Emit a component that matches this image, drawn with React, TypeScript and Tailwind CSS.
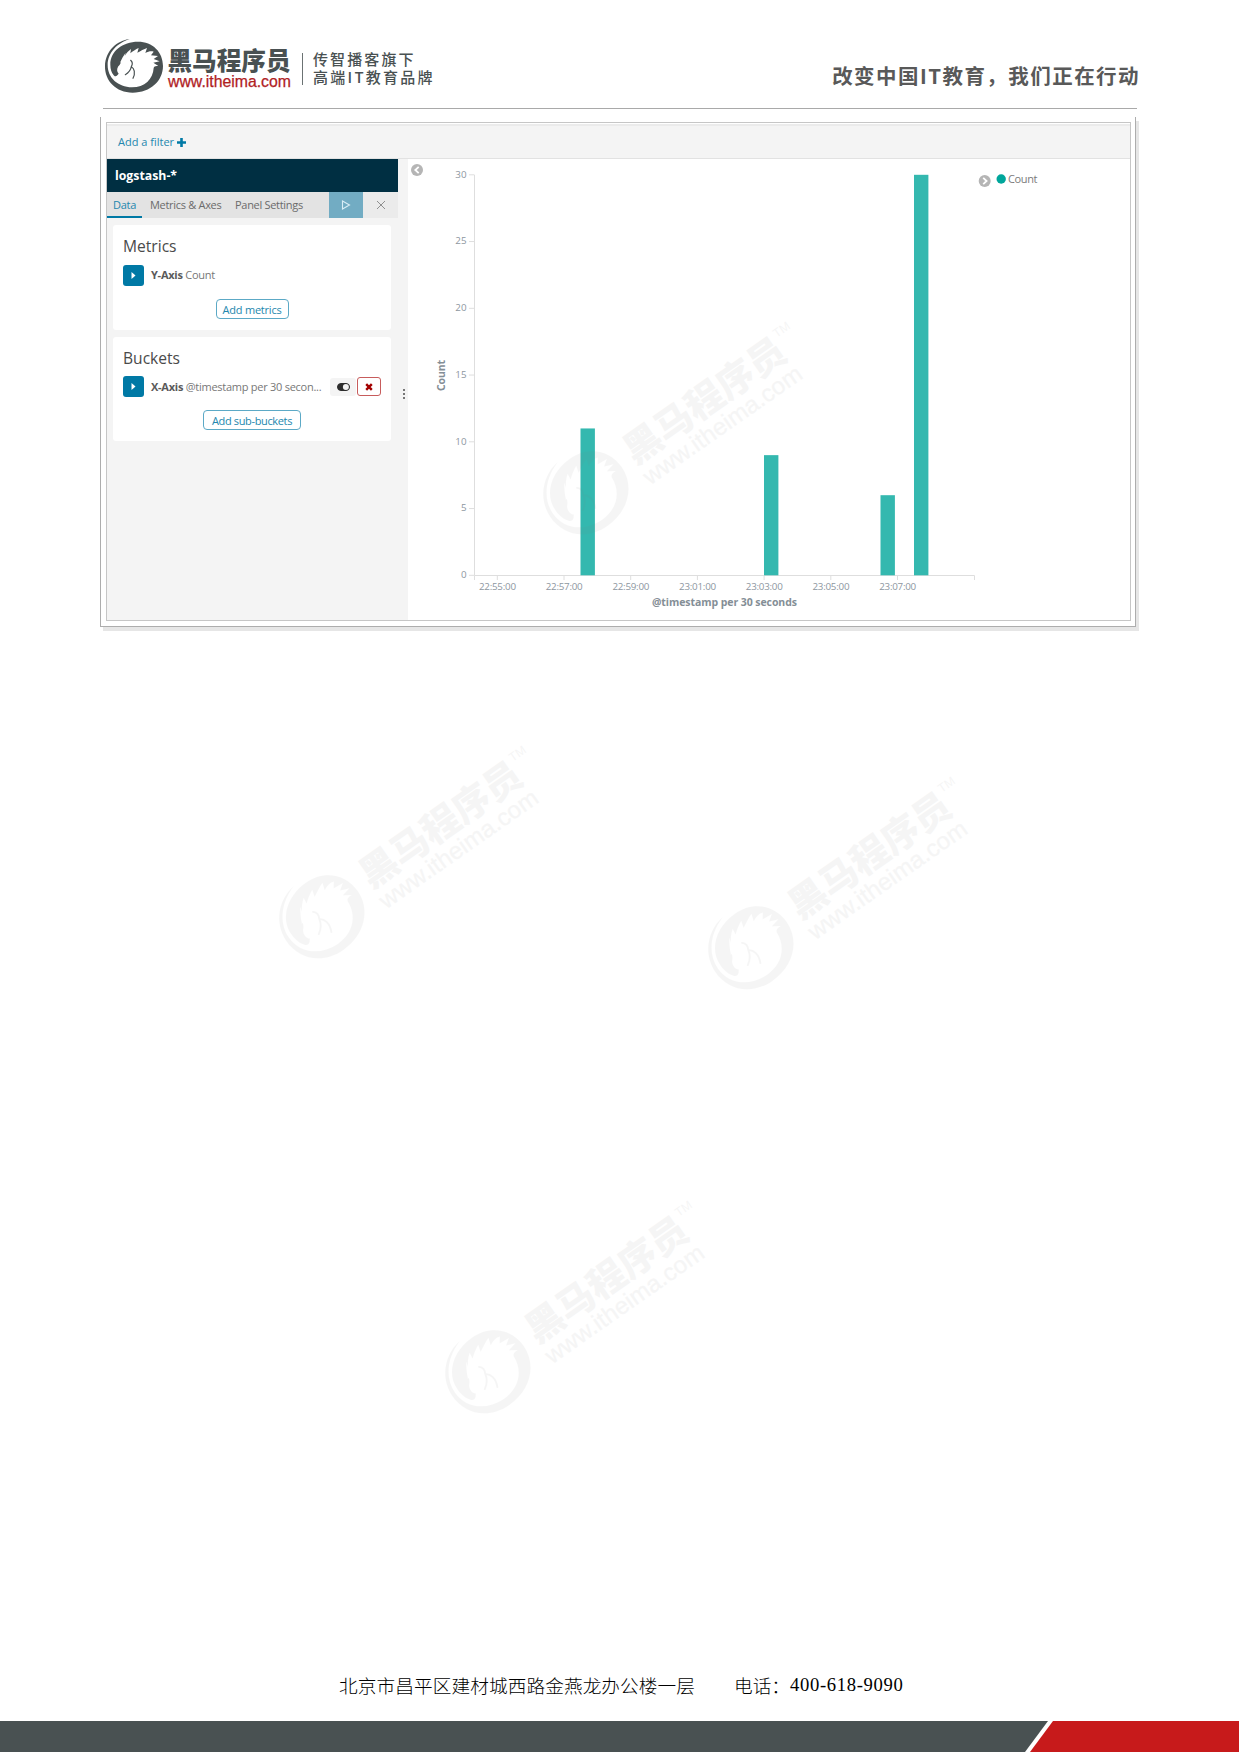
import React from "react";

const TEXT_FONT = "font-['Open_Sans','Noto_Sans_CJK_SC',sans-serif]";
const CJK = "'Noto Sans CJK SC', sans-serif";

type LogoProps = {
  className: string;
  ink: string;
  accent: string;
  textTransform?: string;
  trademark?: boolean;
};

function Logo({ className, ink, accent, textTransform, trademark }: LogoProps) {
  return (
    <svg className={className} viewBox="0 0 190 60" overflow="visible">
      <g transform="scale(0.33333) translate(-42 -24)" fill={ink}>
        <path
          fillRule="evenodd"
          d="M119 27 C82 31 46 62 45 108 C44 152 78 188 128 188 C182 188 219 152 219 108 C219 66 188 35 144 35 C98 35 60 64 61 104 C61 118 65 128 70 134 C72 138 77 141 82 136 L86 131 C80 126 80 116 85 109 C90 105 91 101 93 97 L90 98 C95 86 101 76 107 68 L104 78 C109 69 116 62 123 57 L121 70 C128 64 137 58 146 54 L142 68 C152 63 162 57 171 54 L166 69 C175 64 184 62 191 65 L183 76 L204 78 L191 87 L209 94 L190 98 L205 108 C196 107 192 109 191 114 C189 148 164 172 126 172 C84 171 53 144 53 105 C53 68 83 38 119 27 Z"
        />
        <path
          d="M122 91 C128 96 128 103 124 110 C122 121 116 128 106 134 M124 110 C133 115 137 129 129 145"
          fill="none"
          stroke={ink}
          strokeWidth="3.6"
          strokeLinecap="round"
        />
      </g>
      <g transform={textTransform}>
        <text
          x="63.5"
          y="32.3"
          fontSize="24.5"
          fontWeight="900"
          textLength="123"
          lengthAdjust="spacingAndGlyphs"
          fill={ink}
          style={{ fontFamily: CJK }}
        >
          黑马程序员
        </text>
        <text
          x="64"
          y="48.5"
          fontSize="15.6"
          textLength="123"
          lengthAdjust="spacingAndGlyphs"
          fill={accent}
          stroke={accent}
          strokeWidth="0.25"
          style={{ fontFamily: "'Liberation Sans', sans-serif" }}
        >
          www.itheima.com
        </text>
        {trademark && (
          <text x="187" y="17" fontSize="8" fill={ink} style={{ fontFamily: "'Liberation Sans', sans-serif" }}>
            TM
          </text>
        )}
      </g>
    </svg>
  );
}

function Watermark({ className }: { className: string }) {
  return (
    <div className={`pointer-events-none absolute opacity-[0.07] ${className}`}>
      <Logo
        className="h-[90px] w-[285px] origin-[45px_42px] -rotate-[35deg]"
        ink="#808080"
        accent="#808080"
        textTransform="translate(2.2 -0.6) scale(1.02)"
        trademark
      />
    </div>
  );
}

function Header() {
  return (
    <header className="mx-auto flex h-[109px] w-[1034px] border-b-[1.5px] border-[#a9a9a9] pt-[38px]">
      <Logo className="ml-px h-[60px] w-[190px]" ink="#495152" accent="#b0211f" />
      <div className="ml-2 mt-[15px] h-8 w-px bg-[#6b7273]" />
      <div className="ml-[10px] mt-3 whitespace-nowrap font-['Noto_Sans_CJK_SC',sans-serif] text-[15px] font-medium leading-[18px] text-[#495152]">
        <div className="tracking-[2.1px]">传智播客旗下</div>
        <div className="tracking-[2.25px]">高端IT教育品牌</div>
      </div>
      <div className="-mr-[3px] ml-auto mt-[23px] whitespace-nowrap font-['Noto_Sans_CJK_SC',sans-serif] text-[20.5px] font-bold leading-7 tracking-[1.45px] text-[#595959]">
        改变中国IT教育，我们正在行动
      </div>
    </header>
  );
}

function ExpandButton() {
  return (
    <span className="flex size-[21px] shrink-0 items-center justify-center rounded-[3px] bg-[#0079a5]">
      <svg className="h-[7px] w-[5px]" viewBox="0 0 5 7">
        <path d="M0.5 0 L4.5 3.5 L0.5 7 Z" fill="#fff" />
      </svg>
    </span>
  );
}

function AddButton({ className, children }: { className: string; children: React.ReactNode }) {
  return (
    <button
      className={`mx-auto flex h-5 items-center justify-center whitespace-nowrap rounded-[4px] border-[1.5px] border-[#5ca9c6] text-[11px] leading-none text-[#2487ae] ${className}`}
    >
      {children}
    </button>
  );
}

function Sidebar() {
  return (
    <aside className="flex w-[301px] shrink-0 bg-[#f4f4f4]">
      <div className="w-[291px]">
        <div className="flex h-[33px] items-center bg-[#002f42] pl-2 pt-px text-[12.3px] font-bold text-white">
          <span>logstash-*</span>
        </div>
        <div className="flex h-[26px] bg-[#e3e3e3] text-[11px] tracking-[-0.3px] text-[#6b6b6b]">
          <div className="flex w-[35px] items-center justify-center border-b-2 border-[#0079a5] pt-[2px] text-[#2487ae]">
            Data
          </div>
          <div className="ml-[8px] flex w-[72px] items-center whitespace-nowrap pt-px">Metrics &amp; Axes</div>
          <div className="ml-[13px] flex items-center whitespace-nowrap pt-px">Panel Settings</div>
          <div className="ml-auto flex w-[34px] items-center justify-center bg-[#72acc3]">
            <svg className="size-[10px]" viewBox="0 0 10 10">
              <path d="M1.5 1 L8.5 5 L1.5 9 Z" fill="none" stroke="#d9eef6" strokeWidth="1.1" />
            </svg>
          </div>
          <div className="flex w-[35px] items-center justify-center bg-[#ebebeb]">
            <svg className="size-[10px]" viewBox="0 0 10 10">
              <path d="M1 1 L9 9 M9 1 L1 9" stroke="#8f8f8f" strokeWidth="1" />
            </svg>
          </div>
        </div>
        <div className="ml-[6px] mt-[7px] flex w-[278px] flex-col gap-[7px]">
          <section className="h-[105px] rounded-[3px] bg-white pt-[10px]">
            <h2 className="pl-[10px] text-[15.6px] leading-[22px] text-[#4a4a4a]">Metrics</h2>
            <div className="mt-[8px] flex items-center pl-[10px] text-[11px] tracking-[-0.26px] text-[#777]">
              <ExpandButton />
              <span className="ml-[7px]">
                <b className="text-[#5a5a5a]">Y-Axis</b> Count
              </span>
            </div>
            <AddButton className="mt-[13px] w-[73px] tracking-[-0.2px]">Add metrics</AddButton>
          </section>
          <section className="h-[104px] rounded-[3px] bg-white pt-[10px]">
            <h2 className="pl-[10px] text-[15.6px] leading-[22px] text-[#4a4a4a]">Buckets</h2>
            <div className="mt-[7px] flex items-center pl-[10px] text-[11px] tracking-[-0.26px] text-[#777]">
              <ExpandButton />
              <span className="ml-[7px] w-[179px] whitespace-nowrap pt-px">
                <b className="text-[#5a5a5a]">X-Axis</b> @timestamp per 30 secon...
              </span>
              <span className="flex h-[18px] w-[26px] items-center justify-center rounded-[3px] bg-[#f4f4f4]">
                <svg className="h-2 w-[13px]" viewBox="0 0 13 8">
                  <rect x="0.5" y="0.5" width="12" height="7" rx="3.5" fill="#2d2d2d" stroke="#2d2d2d" />
                  <circle cx="8.9" cy="4" r="3" fill="#f4f4f4" />
                </svg>
              </span>
              <span className="ml-px flex h-[19px] w-6 items-center justify-center rounded-[3px] border-[1.5px] border-[#c75c5c]">
                <svg className="size-2" viewBox="0 0 8 8">
                  <path d="M1.2 1.2 L6.8 6.8 M6.8 1.2 L1.2 6.8" stroke="#a30000" strokeWidth="2.4" />
                </svg>
              </span>
            </div>
            <AddButton className="mt-[13px] w-[98px] tracking-[-0.35px]">Add sub-buckets</AddButton>
          </section>
        </div>
      </div>
      <div className="flex w-[10px] flex-col items-center gap-[2px] pt-[230px]">
        <i className="ml-[2px] size-[2px] bg-[#777]" />
        <i className="ml-[2px] size-[2px] bg-[#777]" />
        <i className="ml-[2px] size-[2px] bg-[#777]" />
      </div>
    </aside>
  );
}

const BARS = [
  { x: 580.5, value: 11 },
  { x: 764, value: 9 },
  { x: 880.5, value: 6 },
  { x: 914, value: 30 },
];
const TIMES = ["22:55:00", "22:57:00", "22:59:00", "23:01:00", "23:03:00", "23:05:00", "23:07:00"];
const COUNTS = [0, 5, 10, 15, 20, 25, 30];
const yOf = (v: number) => 575.3 - v * 13.35;

function Chart() {
  return (
    <svg className="h-[461px] w-[721px] shrink-0 bg-white" viewBox="408 159 721 461">
      <circle cx="417" cy="170" r="6" fill="#b5b5b5" />
      <path d="M418.7 166.8 L415.3 170 L418.7 173.2" fill="none" stroke="#fff" strokeWidth="1.8" />
      <circle cx="984.7" cy="181" r="6" fill="#b5b5b5" />
      <path d="M983.2 177.8 L986.6 181 L983.2 184.2" fill="none" stroke="#fff" strokeWidth="1.8" />
      <circle cx="1001.2" cy="179" r="4.7" fill="#00a69b" />
      <text x="1008" y="183" fontSize="11" textLength="29.5" fill="#7b7b7b">
        Count
      </text>

      <g stroke="#dedede" fill="none">
        <path d="M474.5 175 V575.5" />
        <path d="M474.5 580 V575.5 H974.5 V580" />
        {COUNTS.map((v) => (
          <path key={v} d={`M469 ${yOf(v)} H474.5`} />
        ))}
        {TIMES.map((t, i) => (
          <path key={t} d={`M${497.3 + i * 66.7} 575.5 V580`} />
        ))}
      </g>
      <g fill="#8e979f" fontSize="9.8">
        {COUNTS.map((v) => (
          <text key={v} x="466.5" y={yOf(v) + 2.9} textAnchor="end">
            {v}
          </text>
        ))}
        {TIMES.map((t, i) => (
          <text key={t} x={479 + i * 66.7} y="590.4" textLength="37">
            {t}
          </text>
        ))}
      </g>
      <g fill="#848e96" fontSize="10.5" fontWeight="700">
        <text x="652" y="606.3" textLength="145">
          @timestamp per 30 seconds
        </text>
        <text transform="translate(445 391) rotate(-90)" textLength="31">
          Count
        </text>
      </g>
      {BARS.map((b) => (
        <rect key={b.x} x={b.x} y={yOf(b.value)} width="14.4" height={575.3 - yOf(b.value)} fill="#34b8af" />
      ))}
    </svg>
  );
}

function Screenshot() {
  return (
    <div className="ml-[100px] mt-2 h-[510px] w-[1036px] border-[1.5px] border-t-0 border-[#adadad] pl-[5px] pt-[5px] shadow-[3px_4px_0_#e6e6e6]">
      <div className={`h-[499px] w-[1025px] border border-[#c6c6c6] bg-white pt-px ${TEXT_FONT}`}>
        <div className="flex h-[35px] items-center border-b border-t-2 border-b-[#e2e2e2] border-t-[#ebebeb] bg-[#f4f4f4] pl-[11px] text-[11px] text-[#2487ae]">
          <span>Add a filter</span>
          <svg className="ml-[3px] size-[9px]" viewBox="0 0 9 9">
            <path d="M4.5 0 V9 M0 4.5 H9" stroke="#0079a5" strokeWidth="2.6" />
          </svg>
        </div>
        <div className="flex h-[461px]">
          <Sidebar />
          <Chart />
        </div>
      </div>
    </div>
  );
}

function Footer() {
  return (
    <footer className="mt-auto">
      <div className="ml-[339px] flex h-[54px] whitespace-nowrap font-['Noto_Sans_CJK_SC',sans-serif] text-[18.65px] font-light leading-[36px] text-black">
        <span className="tracking-[0.1px]">北京市昌平区建材城西路金燕龙办公楼一层</span>
        <span className="ml-[39px] w-[56px]">电话：</span>
        <span className="font-['Liberation_Serif',serif] font-normal tracking-[0.65px]">400-618-9090</span>
      </div>
      <div className="flex h-[31px] w-[1239px]">
        <div className="w-[1048px] bg-[#495152] [clip-path:polygon(0_0,100%_0,calc(100%_-_23px)_100%,0_100%)]" />
        <div className="-ml-[18px] flex-1 bg-[#c71a1b] [clip-path:polygon(23px_0,100%_0,100%_100%,0_100%)]" />
      </div>
    </footer>
  );
}

export default function App() {
  return (
    <div className="relative flex h-[1752px] w-[1240px] flex-col overflow-hidden bg-white">
      <Header />
      <Screenshot />
      <Footer />
      <Watermark className="left-[541px] top-[450px]" />
      <Watermark className="left-[277px] top-[874px]" />
      <Watermark className="left-[706px] top-[905px]" />
      <Watermark className="left-[443px] top-[1329px]" />
    </div>
  );
}
